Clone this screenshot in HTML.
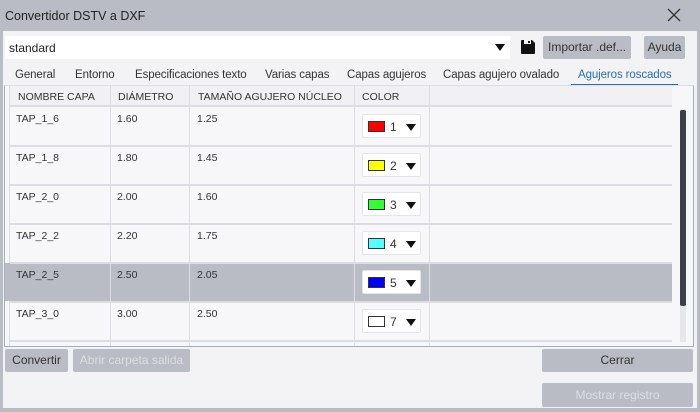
<!DOCTYPE html>
<html><head><meta charset="utf-8"><style>
*{margin:0;padding:0;box-sizing:border-box}
body{width:700px;height:412px;overflow:hidden;background:#b9bcc4;font-family:"Liberation Sans",sans-serif;font-size:11.5px;color:#222;position:relative}
.a{position:absolute}
.body{left:3px;top:31px;width:694px;height:377px;background:#f3f3f6}
.btn{position:absolute;background:#b9bcc4;border-radius:2px;text-align:center;color:#333;font-size:12px}
.dis{color:#dcdde2}
.tab{position:absolute;top:69px;font-size:11.5px;color:#333;letter-spacing:-0.1px}
.vl{position:absolute;top:86px;width:1px;height:260px;background:#dcdde4}
.hl{position:absolute;left:10px;width:662px;height:2px;background:#dcdde4}
.cell{position:absolute;font-size:10.5px;color:#333}
.cb{position:absolute;left:362px;width:59px;height:24px;background:#fff;border:1px solid #e4e5ea;border-radius:2px}
.sw{position:absolute;left:5px;top:6px;width:17px;height:11px;border:1px solid #333}
.num{position:absolute;left:27px;top:5px;font-size:12px;color:#333}
.tri{position:absolute;left:43px;top:9px;width:0;height:0;border-left:5px solid transparent;border-right:5px solid transparent;border-top:7px solid #111}
</style></head><body>
<div class="a" style="left:5px;top:9px;font-size:12.5px;color:#222">Convertidor DSTV a DXF</div>
<svg class="a" style="left:667px;top:8px" width="14" height="14"><path d="M1 1L13 13M13 1L1 13" stroke="#333" stroke-width="1.3"/></svg>
<div class="a body"></div>
<div class="a" style="left:5px;top:36px;width:505px;height:23px;background:#fff;border-radius:2px"></div>
<div class="a" style="left:9px;top:41px;font-size:12px">standard</div>
<div class="a" style="left:495px;top:44px;border-left:5px solid transparent;border-right:5px solid transparent;border-top:7px solid #111"></div>
<svg class="a" style="left:520px;top:39px" width="16" height="16"><path d="M1 2Q1 1 2 1H12L15 4V14Q15 15 14 15H2Q1 15 1 14Z" fill="#111"/><rect x="4" y="1" width="7" height="4" fill="#f3f3f6"/><rect x="8" y="2" width="2" height="2" fill="#111"/></svg>
<div class="btn" style="left:543px;top:36px;width:88px;height:23px;line-height:23px">Importar .def...</div>
<div class="btn" style="left:644px;top:36px;width:41px;height:23px;line-height:23px">Ayuda</div>
<div class="tab" style="left:15px">General</div>
<div class="tab" style="left:75px">Entorno</div>
<div class="tab" style="left:135px">Especificaciones texto</div>
<div class="tab" style="left:265px">Varias capas</div>
<div class="tab" style="left:347px">Capas agujeros</div>
<div class="tab" style="left:443px">Capas agujero ovalado</div>
<div class="tab" style="left:578px;color:#2a6fb0">Agujeros roscados</div>
<div class="a" style="left:571px;top:84px;width:107px;height:2px;background:#2a6fb0"></div>
<div class="a" style="left:4px;top:85px;width:690px;height:262px;border:1px solid #9fb0c6;border-top:1px solid #dde"></div>
<div class="a" style="left:5px;top:86px;width:688px;height:260px;background:#f7f7fa"></div>
<div class="a" style="left:9px;top:86px;width:1px;height:260px;background:#dcdde4"></div>
<div class="a" style="left:10px;top:86px;width:662px;height:20px;background:#f1f1f4"></div>
<div class="a" style="left:5px;top:263px;width:667px;height:38px;background:#b9bcc4"></div>
<div class="hl" style="top:105px"></div>
<div class="hl" style="top:145px"></div>
<div class="hl" style="top:184px"></div>
<div class="hl" style="top:223px"></div>
<div class="hl" style="top:262px"></div>
<div class="hl" style="top:301px"></div>
<div class="hl" style="top:340px"></div>
<div class="vl" style="left:110px"></div>
<div class="vl" style="left:189px"></div>
<div class="vl" style="left:354px"></div>
<div class="vl" style="left:429px"></div>
<div class="a" style="left:680px;top:109px;width:6px;height:233px;background:#e6e7ea"></div>
<div class="a" style="left:680px;top:110px;width:6px;height:196px;background:#3c3f45;border-radius:2px"></div>
<div class="cell" style="left:18px;top:91px;font-size:10.5px">NOMBRE CAPA</div>
<div class="cell" style="left:118px;top:91px;font-size:10.5px">DIÁMETRO</div>
<div class="cell" style="left:198px;top:91px;font-size:10.5px">TAMAÑO AGUJERO NÚCLEO</div>
<div class="cell" style="left:362px;top:91px;font-size:10.5px">COLOR</div>

<div class="cell" style="left:16px;top:113px">TAP_1_6</div><div class="cell" style="left:117px;top:113px">1.60</div><div class="cell" style="left:197px;top:113px">1.25</div>
<div class="cb" style="top:114px"><div class="sw" style="background:#f00"></div><div class="num">1</div><div class="tri"></div></div>
<div class="cell" style="left:16px;top:152px">TAP_1_8</div><div class="cell" style="left:117px;top:152px">1.80</div><div class="cell" style="left:197px;top:152px">1.45</div>
<div class="cb" style="top:153px"><div class="sw" style="background:#ff0"></div><div class="num">2</div><div class="tri"></div></div>
<div class="cell" style="left:16px;top:191px">TAP_2_0</div><div class="cell" style="left:117px;top:191px">2.00</div><div class="cell" style="left:197px;top:191px">1.60</div>
<div class="cb" style="top:192px"><div class="sw" style="background:#3f3"></div><div class="num">3</div><div class="tri"></div></div>
<div class="cell" style="left:16px;top:230px">TAP_2_2</div><div class="cell" style="left:117px;top:230px">2.20</div><div class="cell" style="left:197px;top:230px">1.75</div>
<div class="cb" style="top:231px"><div class="sw" style="background:#5ff"></div><div class="num">4</div><div class="tri"></div></div>
<div class="cell" style="left:16px;top:269px">TAP_2_5</div><div class="cell" style="left:117px;top:269px">2.50</div><div class="cell" style="left:197px;top:269px">2.05</div>
<div class="cb" style="top:270px"><div class="sw" style="background:#00f"></div><div class="num">5</div><div class="tri"></div></div>
<div class="cell" style="left:16px;top:308px">TAP_3_0</div><div class="cell" style="left:117px;top:308px">3.00</div><div class="cell" style="left:197px;top:308px">2.50</div>
<div class="cb" style="top:309px"><div class="sw" style="background:#fff"></div><div class="num">7</div><div class="tri"></div></div>

<div class="btn" style="left:5px;top:349px;width:63px;height:23px;line-height:23px">Convertir</div>
<div class="btn dis" style="left:73px;top:349px;width:117px;height:23px;line-height:23px">Abrir carpeta salida</div>
<div class="btn" style="left:542px;top:349px;width:151px;height:23px;line-height:23px">Cerrar</div>
<div class="btn dis" style="left:542px;top:383px;width:151px;height:24px;line-height:24px">Mostrar registro</div>
</body></html>
